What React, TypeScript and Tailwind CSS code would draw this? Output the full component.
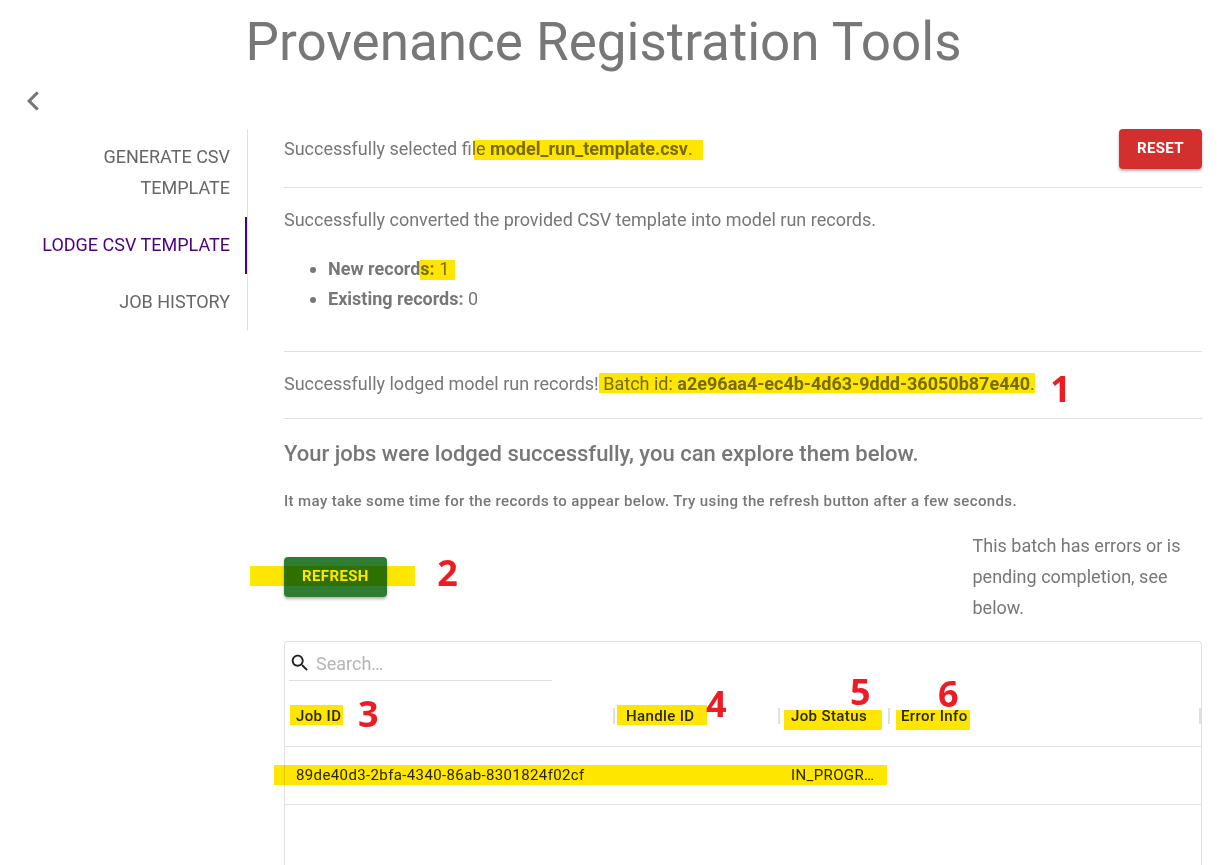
import type { ReactNode } from "react";

const tabs = [
  { label: "Generate CSV Template", active: false },
  { label: "Lodge CSV Template", active: true },
  { label: "Job History", active: false },
];

function Highlight({ className }: { className: string }) {
  return (
    <span
      aria-hidden="true"
      className={`pointer-events-none absolute h-5 bg-[#ffe600] mix-blend-multiply ${className}`}
    />
  );
}

function Step({ className, children }: { className: string; children: ReactNode }) {
  return (
    <span
      className={`pointer-events-none absolute font-['Noto_Sans',sans-serif] text-4xl leading-9 font-bold text-[#ed1c24] ${className}`}
    >
      {children}
    </span>
  );
}

function HeaderCell({ label, width, children }: { label: string; width: string; children?: ReactNode }) {
  return (
    <th scope="col" className={`relative h-15 pl-[11px] text-left font-medium ${width}`}>
      <span>{label}</span>
      <span className="absolute top-[22px] right-0 h-4 w-[2px] bg-[#e0e0e0]" />
      {children}
    </th>
  );
}

export default function App() {
  return (
    <div className="flex min-h-screen flex-col bg-white pr-[29px] pl-[5px] font-[Roboto,sans-serif] text-lg leading-[31px] font-normal text-[#777]">
      <h1 className="pt-[9px] text-center text-[53px] leading-[66px]">Provenance Registration Tools</h1>
      <div className="flex h-[54px] items-center pb-[2px] pl-[17px]">
        <button type="button" aria-label="Back">
          <svg viewBox="0 0 24 24" className="size-[22px] fill-[#757575] stroke-[#757575]">
            <path d="M17.77 3.77 16 2 6 12l10 10 1.77-1.77L9.54 12z" />
          </svg>
        </button>
      </div>

      <div className="flex flex-1 items-stretch">
        <nav className="w-[243px] shrink-0 self-start border-r border-[#e0e0e0]">
          {tabs.map((tab) => (
            <a
              key={tab.label}
              href="#"
              className={`flex justify-end border-r-2 pt-3 pr-[15px] pb-[14px] pl-9 text-right uppercase ${
                tab.active ? "border-[#4b0082] text-[#4b0082]" : "border-transparent text-[#666]"
              }`}
            >
              {tab.label}
            </a>
          ))}
        </nav>

        <main className="ml-9 flex min-w-0 flex-1 flex-col">
          <section className="flex items-start justify-between border-b border-[#e0e0e0] pb-[18px]">
            <p className="pt-1">
              Successfully selected file{" "}
              <span className="relative">
                <strong className="font-bold">model_run_template.csv</strong>.
                <Highlight className="top-[2px] -right-[10px] -left-4" />
              </span>
            </p>
            <button
              type="button"
              className="h-10 rounded bg-[#d32f2f] px-[18px] pb-[2px] text-[15px] leading-6 font-bold tracking-wide text-white uppercase shadow-[0_2px_3px_rgba(0,0,0,0.3)]"
            >
              Reset
            </button>
          </section>

          <section className="border-b border-[#e0e0e0] pt-4 pb-[37px]">
            <p>Successfully converted the provided CSV template into model run records.</p>
            <ul className="list-disc pt-[19px] pl-11 leading-[30px]">
              <li>
                <span className="relative">
                  <strong className="font-bold">New records:</strong> 1
                  <Highlight className="top-[2px] -right-[6px] w-[35px]" />
                </span>
              </li>
              <li>
                <strong className="font-bold">Existing records:</strong> 0
              </li>
            </ul>
          </section>

          <section className="border-b border-[#e0e0e0] pt-4 pb-[19px]">
            <p>
              Successfully lodged model run records!{" "}
              <span className="relative">
                Batch id: <strong className="font-bold">a2e96aa4-ec4b-4d63-9ddd-36050b87e440</strong>.
                <Highlight className="top-0 right-0 -left-1" />
                <Step className="-top-[2px] -right-9">1</Step>
              </span>
            </p>
          </section>

          <h2 className="pt-[19px] text-[22px] font-medium">
            Your jobs were lodged successfully, you can explore them below.
          </h2>
          <p className="pt-[17px] text-[15px] font-medium tracking-wide">
            It may take some time for the records to appear below. Try using the refresh button after a few seconds.
          </p>

          <div className="flex items-center justify-between pt-[13px] pb-[18px]">
            <div className="relative">
              <button
                type="button"
                className="block h-10 rounded bg-[#2e7d32] px-[18px] pb-[2px] text-[15px] leading-6 font-bold tracking-wide text-white uppercase shadow-[0_2px_3px_rgba(0,0,0,0.3)]"
              >
                Refresh
              </button>
              <Highlight className="top-[9px] -right-7 -left-[34px]" />
              <Step className="-top-[2px] -right-[71px]">2</Step>
            </div>
            <p className="w-1/4">This batch has errors or is pending completion, see below.</p>
          </div>

          <div className="flex-1 rounded-t border border-b-0 border-[#e0e0e0]">
            <label className="mt-1 ml-1 flex h-[35px] w-[263px] items-center gap-[5px] border-b border-[#e0e0e0]">
              <svg viewBox="0 0 24 24" className="size-[22px] shrink-0 fill-[#212121]" aria-hidden="true">
                <path d="M15.5 14h-.79l-.28-.27C15.41 12.59 16 11.11 16 9.5 16 5.91 13.09 3 9.5 3S3 5.91 3 9.5 5.91 16 9.5 16c1.61 0 3.09-.59 4.23-1.57l.27.28v.79l5 4.99L20.49 19zm-6 0C7.01 14 5 11.99 5 9.5S7.01 5 9.5 5 14 7.01 14 9.5 11.99 14 9.5 14" />
              </svg>
              <input
                type="text"
                aria-label="Search"
                placeholder="Search…"
                className="min-w-0 flex-1 bg-transparent text-[#212121] outline-none placeholder:text-[#b5b5b5]"
              />
            </label>
            <table className="mt-[5px] w-full table-fixed border-collapse text-[15px] leading-6 tracking-wide text-[#2b2b2b]">
              <thead>
                <tr className="border-b border-[#e0e0e0]">
                  <HeaderCell label="Job ID" width="w-[330px]">
                    <Highlight className="top-[19px] left-[5px] w-[53px]" />
                    <Step className="top-[10px] left-[73px]">3</Step>
                  </HeaderCell>
                  <HeaderCell label="Handle ID" width="w-[165px]">
                    <Highlight className="top-[19px] left-[2px] w-[90px]" />
                    <Step className="top-0 left-[91px]">4</Step>
                  </HeaderCell>
                  <HeaderCell label="Job Status" width="w-[110px]">
                    <Highlight className="top-6 left-1 w-[98px]" />
                    <Step className="-top-3 left-[70px]">5</Step>
                  </HeaderCell>
                  <HeaderCell label="Error Info" width="w-auto">
                    <Highlight className="top-6 left-[6px] w-[74px]" />
                    <Step className="-top-[10px] left-12">6</Step>
                  </HeaderCell>
                </tr>
              </thead>
              <tbody>
                <tr className="h-[58px] border-b border-[#e0e0e0]">
                  <td className="relative pl-[11px]">
                    89de40d3-2bfa-4340-86ab-8301824f02cf
                    <Highlight className="top-[18px] -left-[11px] w-[613px]" />
                  </td>
                  <td />
                  <td className="truncate px-[11px]">IN_PROGRESS</td>
                  <td />
                </tr>
              </tbody>
            </table>
          </div>
        </main>
      </div>
    </div>
  );
}
